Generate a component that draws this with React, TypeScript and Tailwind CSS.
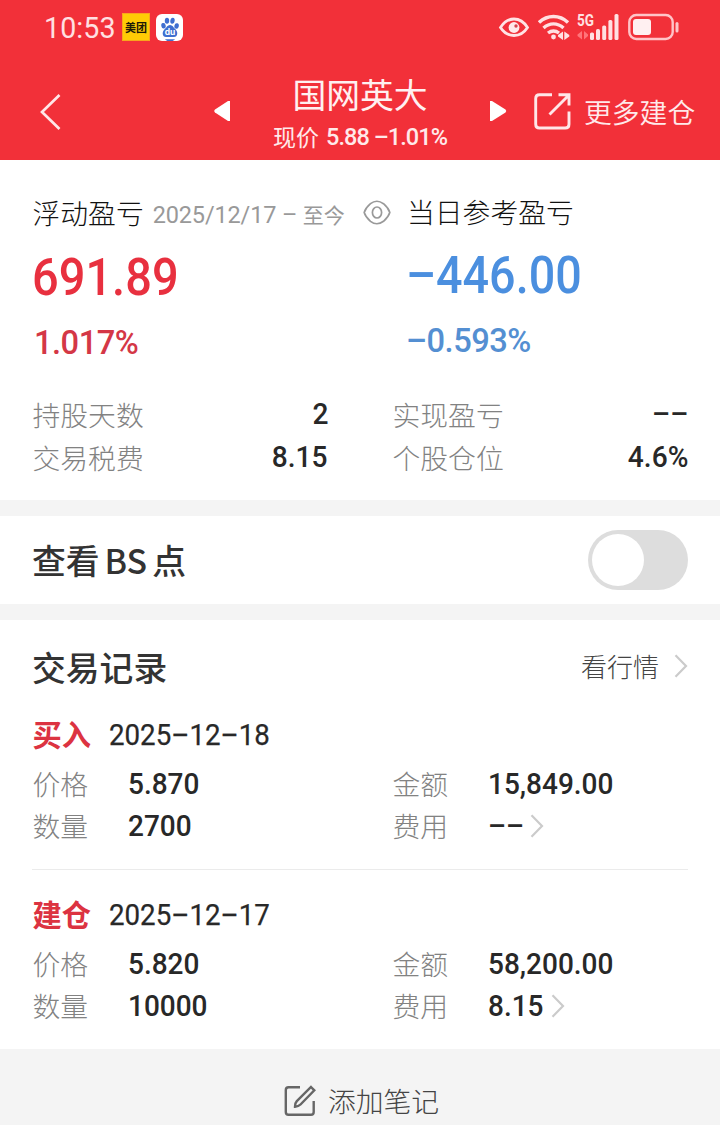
import type { ReactNode } from "react";

const cjk = "font-['Noto_Sans_CJK_SC',sans-serif]";

function Num({ children, className = "" }: { children: ReactNode; className?: string }) {
  return (
    <span className={`font-[Roboto,'Liberation_Sans',sans-serif] leading-none whitespace-pre ${className}`}>
      {children}
    </span>
  );
}

function Label({ children, className = "" }: { children: ReactNode; className?: string }) {
  return (
    <span className={`pt-[2px] pl-[0.5px] text-[27.8px] leading-none font-light text-[#828282] ${className}`}>
      {children}
    </span>
  );
}

function Chevron({ className = "" }: { className?: string }) {
  return (
    <svg width="14" height="24" viewBox="0 0 14 24" fill="none" stroke="#cbcbcb" strokeWidth="2.2" className={className}>
      <path d="M1.5 1.2 12 12 1.5 22.8" />
    </svg>
  );
}

function StatusBar() {
  return (
    <div className="flex h-[54px] items-center">
      <Num className="ml-[43px] w-[79px] origin-left scale-x-[0.985] pt-[2px] pl-px text-[29px] tracking-[0.1px] text-[#ffe0e2]">10:53</Num>
      <span className="flex h-7 w-7 items-center justify-center border border-[#f9a51c] bg-[#ffcb05] text-[11px] leading-none font-bold text-[#1d1a08]">
        美团
      </span>
      <svg width="27" height="27" viewBox="0 0 27 27" className="ml-1.5">
        <rect width="27" height="27" rx="6" fill="#fff" />
        <g fill="#3f6fd0">
          <ellipse cx="7.5" cy="11.8" rx="2.2" ry="2.8" transform="rotate(-12 7.5 11.8)" />
          <ellipse cx="11" cy="6.8" rx="2.2" ry="3" />
          <ellipse cx="16.5" cy="6.8" rx="2.2" ry="3" transform="rotate(8 16.5 6.8)" />
          <ellipse cx="20.6" cy="12" rx="2.2" ry="2.8" transform="rotate(12 20.6 12)" />
          <path d="M14 11c2.6 0 3.2 2.3 5.2 4 3.2 2.8 2.6 8-1.2 8h-8c-3.8 0-4.4-5.2-1.2-8 2-1.7 2.6-4 5.2-4z" />
          <path d="M9 25.2h10c-1 1.2-2 1.8-3.3 1.8h-3.4c-1.3 0-2.3-.6-3.3-1.8z" />
        </g>
        <text x="14" y="21.3" textAnchor="middle" fontFamily="Inter, sans-serif" fontSize="8.5" fontWeight="700" fill="#fff">du</text>
      </svg>
      <svg width="32" height="22" viewBox="0 0 32 22" fill="none" className="ml-[315px]">
        <path d="M2.5 11.500C6 6 10.500 3 16 3s10 3 13.500 8.500C26 17 21.500 19.500 16 19.500S6 17 2.500 11.500z" stroke="#ffe3e5" strokeWidth="2.8" />
        <circle cx="16" cy="11.500" r="5.4" fill="#ffe9ea" />
        <circle cx="18" cy="10" r="1.7" fill="#d5434c" />
      </svg>
      <svg width="32" height="28" viewBox="0 0 32 28" fill="none" className="ml-2" stroke="#ffe0e2" strokeWidth="3.4">
        <path d="M1 9.500c8.500-8 20.500-8 29 0" />
        <path d="M5.500 15c6-5.500 14-5.500 20 0" />
        <path d="M10 20c4-3 7-3 11 0" />
        <circle cx="15.500" cy="24" r="2.400" fill="#ffe0e2" stroke="none" />
        <path d="M25 18.500v8.500l-5-3.500v-1.500zM26.300 27v-8.500l5 3.500v1.500z" fill="#ffe0e2" stroke="none" />
      </svg>
      <svg width="44" height="28" viewBox="0 0 44 28" className="ml-[7px]">
        <text x="0" y="13" fontFamily="Roboto, sans-serif" fontSize="16.500" fontWeight="700" fill="#ffe0e2" textLength="17" lengthAdjust="spacingAndGlyphs">5G</text>
        <path d="M5 18v8.500L.5 23v-1.500zM7 26.500V18l4 3.500V23z" fill="#ff747a" />
        <g fill="#ffe0e2">
          <rect x="13" y="19.500" width="4" height="7.500" rx="1.500" />
          <rect x="19" y="16" width="4" height="11" rx="1.500" />
          <rect x="25.200" y="12.500" width="4" height="14.500" rx="1.500" />
          <rect x="31.400" y="7" width="4" height="20" rx="1.500" />
          <rect x="37.500" y="1" width="4" height="26" rx="1.500" />
        </g>
      </svg>
      <svg width="52" height="28" viewBox="0 0 52 28" fill="none" className="ml-[7px]">
        <rect x="1.300" y="2" width="43.400" height="24" rx="7" stroke="#ffc4c8" strokeWidth="2.400" />
        <rect x="5" y="6" width="18" height="16" rx="3" fill="#fff0f1" />
        <path d="M49 10.500v7.500" stroke="#ffc4c8" strokeWidth="3" strokeLinecap="round" />
      </svg>
    </div>
  );
}

function Header() {
  return (
    <header className="h-[160px] bg-[#f23039] text-[#ffe9ea]">
      <StatusBar />
      <div className="flex h-[106px] items-center">
        <svg width="21" height="36" viewBox="0 0 21 36" fill="none" stroke="#ffe6e8" strokeWidth="2.700" className="ml-10 mt-[9px]">
          <path d="M19.500 1 2 18l17.500 17" />
        </svg>
        <svg width="17" height="22" viewBox="0 0 17 22" fill="#fff" className="ml-[153px] mt-[8px]">
          <path d="M16 1v20h-2L1 12.500q-1.500-1.500 0-3L14 1z" />
        </svg>
        <div className="flex w-[258px] flex-col items-center pt-[15px]">
          <h1 className="text-[33.800px] leading-[42px] font-normal text-[#fff0f1]">国网英大</h1>
          <div className="mt-[8px] flex h-[34px] items-center gap-[7px] pb-[6px]">
            <span className="text-[23px] leading-none">现价</span>
            <Num className="pt-[2px] text-[23.500px] font-medium tracking-[-0.950px]">5.88 –1.01%</Num>
          </div>
        </div>
        <svg width="17" height="22" viewBox="0 0 17 22" fill="#fff" className="ml-px mt-[8px]">
          <path d="M0 1v20h2l13.500-8.500q1.500-1.500 0-3L2 1z" />
        </svg>
        <svg width="37" height="37" viewBox="0 0 37 37" fill="none" stroke="#ffe6e8" strokeWidth="2.900" className="ml-[27px] mt-[9px]">
          <path d="M18 1.700H5.500Q1.700 1.700 1.700 5.500v25.700q0 3.800 3.800 3.800h25.700q3.800 0 3.800-3.800V18.500" />
          <path d="M15.500 21.500 34 3M24.500 1.700H35v10.800" />
        </svg>
        <span className="ml-[13px] mt-[9px] text-[27.800px] leading-none font-[350]">更多建仓</span>
      </div>
    </header>
  );
}

function Summary() {
  return (
    <section className="h-[340px] pt-[30px]">
      <div className="flex pl-8">
        <div className="w-[374px]">
          <div className="flex h-11 items-center">
            <span className="pl-[0.5px] pt-px text-[27.800px] leading-none font-light text-[#111]">浮动盈亏</span>
            <Num className="ml-[9px] w-[150px] pt-[8px] text-[23.500px] tracking-[-0.150px] text-[#999]">2025/12/17 –</Num>
            <span className="pt-[5px] text-[21px] leading-none text-[#999]">至今</span>
            <svg width="28" height="25" viewBox="0 0 28 25" fill="none" stroke="#999" strokeWidth="1.700" className="ml-[18px]">
              <path d="M1.200 12.500Q2.500 8 7.500 3.700 13.800-1.200 20.500 3.700 25.500 8 26.800 12.500 25.500 17 20.500 21.300 13.800 26.200 7.500 21.300 2.500 17 1.200 12.500z" />
              <ellipse cx="14" cy="12.500" rx="4.600" ry="5.500" />
            </svg>
          </div>
          <div className="flex h-[87px] items-center">
            <Num className="origin-left scale-x-[0.895] text-[52.500px] font-medium text-[#e8303f]">691.89</Num>
          </div>
          <div className="-mt-px flex h-[43px] items-center">
            <Num className="origin-left scale-x-[0.960] pl-[2px] text-[34px] font-medium tracking-[-0.500px] text-[#d43746]">1.017%</Num>
          </div>
        </div>
        <div>
          <div className="flex h-11 items-center">
            <span className="pl-px text-[27.800px] leading-none font-light text-[#111]">当日参考盈亏</span>
          </div>
          <div className="flex h-[82px] items-center">
            <Num className="origin-left scale-x-[0.890] text-[52.500px] font-medium text-[#4b8fdf]">–446.00</Num>
          </div>
          <div className="flex h-[48px] items-center">
            <Num className="origin-left scale-x-[0.960] text-[34px] font-medium tracking-[-0.500px] text-[#548fd2]">–0.593%</Num>
          </div>
        </div>
      </div>
      <div className="mt-[29px] grid grid-cols-[296px_296px] gap-x-16 px-8">
        <Stat label="持股天数" value="2" />
        <Stat label="实现盈亏" value="––" />
        <Stat label="交易税费" value="8.15" />
        <Stat label="个股仓位" value="4.6%" />
      </div>
    </section>
  );
}

function Stat({ label, value }: { label: string; value: string }) {
  return (
    <div className="flex h-[42.500px] items-center justify-between">
      <Label>{label}</Label>
      <Num className="origin-right scale-x-[0.970] pt-px text-[29px] font-medium text-[#282828]">{value}</Num>
    </div>
  );
}

function Field({ label, value, link }: { label: string; value: string; link?: boolean }) {
  return (
    <div className="flex h-[42px] items-center">
      <Label className="w-24">{label}</Label>
      <Num className="origin-left scale-x-[0.965] pt-[2px] text-[29px] font-medium text-[#282828]">{value}</Num>
      {link && <Chevron className="ml-[5px] mt-px" />}
    </div>
  );
}

type Trade = { kind: string; date: string; price: string; amount: string; count: string; fee: string };

const trades: Trade[] = [
  { kind: "买入", date: "2025–12–18", price: "5.870", amount: "15,849.00", count: "2700", fee: "––" },
  { kind: "建仓", date: "2025–12–17", price: "5.820", amount: "58,200.00", count: "10000", fee: "8.15" },
];

function TradeItem({ t }: { t: Trade }) {
  return (
    <article className="h-[180px] border-b border-[#ebebeb] pt-[20px] last:border-b-0">
      <div className="flex h-[52px] items-center">
        <span className="w-[76px] pb-[4px] pl-[0.5px] text-[29.300px] leading-none font-bold text-[#dc3341]">{t.kind}</span>
        <Num className="origin-left scale-x-[0.955] pb-[2px] pl-px text-[29px] text-[#282828] [-webkit-text-stroke:0.25px_#282828]">{t.date}</Num>
      </div>
      <div className="grid grid-cols-2 gap-x-16">
        <Field label="价格" value={t.price} />
        <Field label="金额" value={t.amount} />
        <Field label="数量" value={t.count} />
        <Field label="费用" value={t.fee} link />
      </div>
    </article>
  );
}

export default function App() {
  return (
    <main className={`h-[1125px] w-[720px] overflow-hidden bg-white ${cjk}`}>
      <Header />
      <Summary />
      <div className="h-4 bg-[#f4f4f4]" />
      <section className="flex h-[88px] items-center justify-between px-8">
        <h2 className="flex items-center text-[33.800px] leading-none font-medium text-[#333]">
          查看<span className="mx-[5px]">BS</span>点
        </h2>
        <button className="flex h-[60px] w-[100px] items-center rounded-full bg-[#ddd] pl-1" aria-label="查看BS点">
          <span className="h-[52px] w-[52px] rounded-full bg-white" />
        </button>
      </section>
      <div className="h-4 bg-[#f4f4f4]" />
      <section className="h-[429px] px-8">
        <div className="flex h-[70px] items-center justify-between pt-[22px]">
          <h2 className="pt-px text-[33.800px] leading-none font-medium text-[#333]">交易记录</h2>
          <div className="flex items-center gap-[15px] text-[26px] leading-none font-light text-[#444]">
            看行情
            <Chevron />
          </div>
        </div>
        {trades.map((t) => (
          <TradeItem key={t.date} t={t} />
        ))}
      </section>
      <footer className="flex h-[76px] items-center justify-center bg-[#f4f4f4] pt-[27px] pl-[3px]">
        <svg width="32" height="32" viewBox="0 0 32 32" fill="none" stroke="#666" strokeWidth="2.400">
          <path d="M16 2.200H4.500Q1.800 2.200 1.800 5v22q0 2.800 2.700 2.800h22.500q2.700 0 2.700-2.800V16" />
          <path d="M27 2 30.300 5.300 16.500 19.500q-2 2-5.500 2.200-.1-3.500 1.800-5.500z" />
        </svg>
        <span className="ml-3 text-[27.800px] leading-none font-light text-[#444]">添加笔记</span>
      </footer>
    </main>
  );
}
